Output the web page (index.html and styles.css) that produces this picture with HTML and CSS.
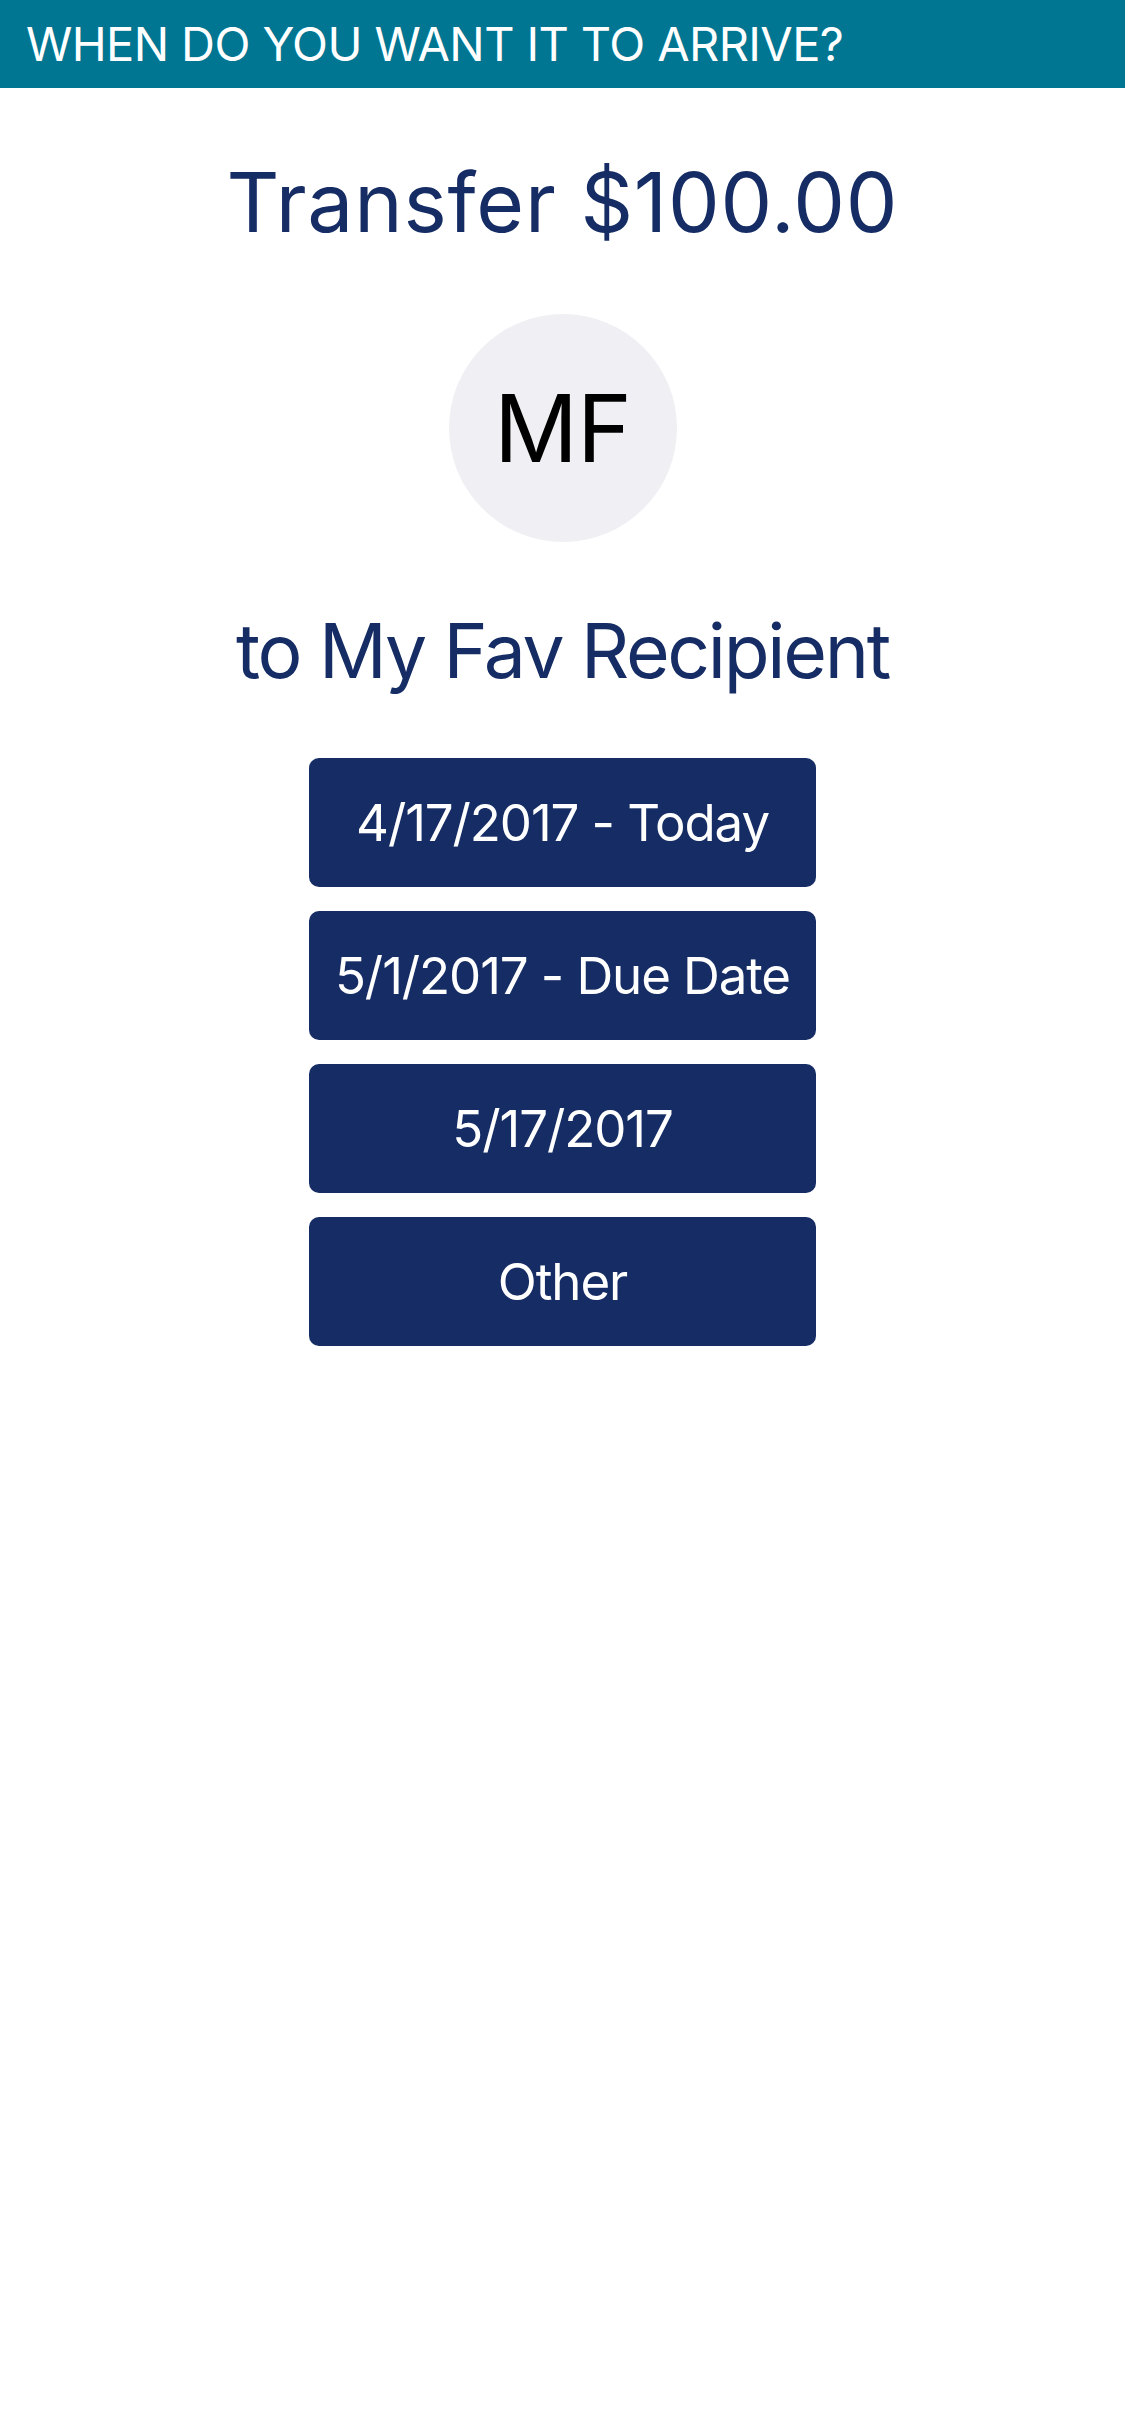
FILE: index.html
```html
<!DOCTYPE html>
<html lang="en">
<head>
<meta charset="utf-8">
<title>When do you want it to arrive?</title>
<link rel="stylesheet" href="styles.css">
</head>
<body>
  <header class="topbar">
    <h1 class="topbar-title">WHEN DO YOU WANT IT TO ARRIVE?</h1>
  </header>
  <main class="content">
    <h2 class="amount">Transfer $100.00</h2>
    <div class="avatar"><span class="initials">MF</span></div>
    <p class="recipient">to My Fav Recipient</p>
    <div class="options">
      <button class="option">4/17/2017 - Today</button>
      <button class="option">5/1/2017 - Due Date</button>
      <button class="option">5/17/2017</button>
      <button class="option">Other</button>
    </div>
  </main>
</body>
</html>
```

FILE: styles.css
```css
html, body {
  margin: 0;
  padding: 0;
  background: #ffffff;
}
body {
  width: 1125px;
  min-height: 2436px;
  font-family: Inter, "Noto Sans", sans-serif;
}
.topbar {
  height: 88px;
  background: #007693;
  display: flex;
  align-items: center;
  padding-left: 26px;
  box-sizing: border-box;
}
.topbar-title {
  margin: 0;
  font-size: 47px;
  font-weight: 400;
  line-height: 88px;
  color: #ffffff;
  letter-spacing: -0.6px;
}
.content {
  display: flex;
  flex-direction: column;
  align-items: center;
}
.amount {
  margin: 65px 0 0;
  font-size: 82px;
  font-weight: 400;
  line-height: 100px;
  color: #152c64;
  letter-spacing: 0.8px;
}
.avatar {
  margin-top: 61px;
  width: 228px;
  height: 228px;
  border-radius: 50%;
  background: #efeff4;
  display: flex;
  align-items: center;
  justify-content: center;
}
.initials {
  font-size: 93px;
  line-height: 1;
  color: #000000;
  letter-spacing: -1px;
}
.recipient {
  margin: 59px 0 0;
  font-size: 75px;
  line-height: 100px;
  color: #152c64;
  letter-spacing: -2.3px;
}
.options {
  margin-top: 57px;
  display: flex;
  flex-direction: column;
  gap: 24px;
}
.option {
  width: 507px;
  height: 129px;
  border: none;
  border-radius: 10px;
  background: #152c64;
  color: #ffffff;
  font-family: Inter, "Noto Sans", sans-serif;
  font-size: 51px;
  font-weight: 400;
  letter-spacing: -1.1px;
  padding: 0;
  cursor: pointer;
}
```
